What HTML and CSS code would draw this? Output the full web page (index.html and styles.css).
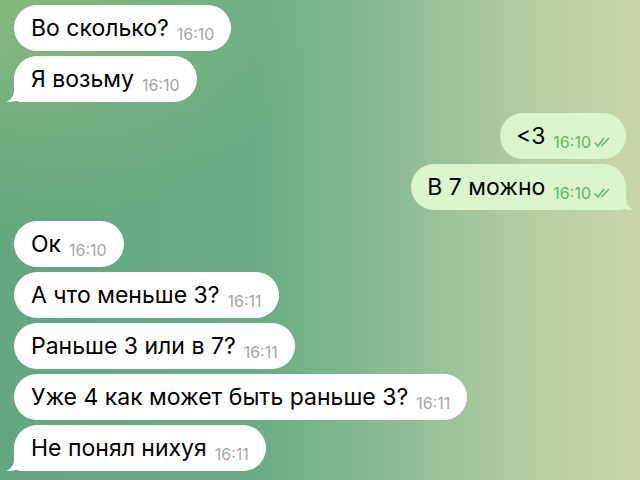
FILE: index.html
```html
<!DOCTYPE html>
<html lang="ru">
<head>
  <meta charset="UTF-8">
  <title>Чат</title>
  <link rel="stylesheet" href="styles.css">
</head>
<body>
  <div class="chat">
    <div class="group in">
      <div class="msg">Во сколько?<span class="time">16:10</span></div>
      <div class="msg tail">Я возьму<span class="time">16:10</span></div>
    </div>

    <div class="group out">
      <div class="msg">&lt;3<span class="time">16:10<svg class="check" viewBox="0 0 20 12"><path d="M1.5 6.5 L5 10 L11 2 M8.5 10 L16 2"/></svg></span></div>
      <div class="msg tail">В 7 можно<span class="time">16:10<svg class="check" viewBox="0 0 20 12"><path d="M1.5 6.5 L5 10 L11 2 M8.5 10 L16 2"/></svg></span></div>
    </div>

    <div class="group in">
      <div class="msg">Ок<span class="time">16:10</span></div>
      <div class="msg">А что меньше 3?<span class="time">16:11</span></div>
      <div class="msg">Раньше 3 или в 7?<span class="time">16:11</span></div>
      <div class="msg">Уже 4 как может быть раньше 3?<span class="time">16:11</span></div>
      <div class="msg tail">Не понял нихуя<span class="time">16:11</span></div>
    </div>
  </div>
</body>
</html>
```

FILE: styles.css
```css
body {
  margin: 0;
  height: 480px;
  overflow: hidden;
  font-family: Inter, 'Liberation Sans', sans-serif;
  background:
    radial-gradient(ellipse at 0% 0%, rgba(160,200,120,0.55), rgba(160,200,120,0) 35%),
    linear-gradient(90deg, #63a67f 0%, #6aac86 40%, #90bf95 65%, #b9cfa0 85%, #c9d7a8 100%);
}

.chat {
  display: flex;
  flex-direction: column;
  gap: 11px;
  padding: 5px 14px;
}

.group {
  display: flex;
  flex-direction: column;
  gap: 5px;
}

.group.in {
  align-items: flex-start;
}

.group.out {
  align-items: flex-end;
}

.msg {
  position: relative;
  display: flex;
  align-items: baseline;
  height: 46px;
  line-height: 46px;
  border-radius: 23px;
  font-size: 23px;
  color: #000;
  white-space: nowrap;
}

.in .msg {
  background: #fff;
  padding: 0 17px 0 17px;
}

.out .msg {
  background: #dbf6cb;
  padding: 0 13px 0 16px;
}

.time {
  display: inline-flex;
  align-items: center;
  margin-left: 8px;
  font-size: 16px;
  line-height: 16px;
  position: relative;
  top: 4px;
}

.in .time {
  color: #a6a6a6;
}

.out .time {
  color: #5cb866;
}

.check {
  width: 20px;
  height: 12px;
  margin-left: 2px;
  fill: none;
  stroke: #5cb866;
  stroke-width: 1.5;
}

.in .msg.tail {
  border-bottom-left-radius: 6px;
}

.out .msg.tail {
  border-bottom-right-radius: 6px;
}

.msg.tail::before {
  content: "";
  position: absolute;
  bottom: 0;
  width: 18px;
  height: 20px;
  background: inherit;
  clip-path: path('M8 0 L8 8 C8 14 5 18 0 20 C6 20.5 10 19 13 17 C15 18.5 17 19.5 18 20 L18 0 Z');
}

.in .msg.tail::before {
  left: -8px;
}

.out .msg.tail::before {
  right: -8px;
  transform: scaleX(-1);
}
```
